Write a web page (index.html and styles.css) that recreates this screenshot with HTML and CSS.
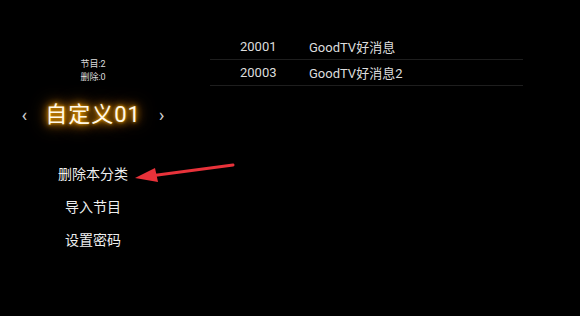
FILE: index.html
```html
<!DOCTYPE html>
<html>
  <head>
    <title>自定义分类</title>
    <link rel="stylesheet" href="styles.css">
  </head>
  <body>
    <div class="screen">
      <div class="side">
        <div class="stats">
          <div>节目:2</div>
          <div>删除:0</div>
        </div>
        <div class="switcher">
          <span class="nav">&lsaquo;</span>
          <span class="title">自定义01</span>
          <span class="nav">&rsaquo;</span>
        </div>
        <ul class="menu">
          <li>删除本分类</li>
          <li>导入节目</li>
          <li>设置密码</li>
        </ul>
      </div>
      <div class="list">
        <div class="row">
          <span class="num">20001</span>
          <span class="name">GoodTV好消息</span>
        </div>
        <div class="row">
          <span class="num">20003</span>
          <span class="name">GoodTV好消息2</span>
        </div>
      </div>
      <svg class="pointer" width="580" height="316" viewBox="0 0 580 316">
        <line x1="233" y1="165" x2="150" y2="176" stroke="#e8323a" stroke-width="3" stroke-linecap="round"/>
        <polygon points="135,178 155,168 158,182" fill="#e8323a"/>
      </svg>
    </div>
  </body>
</html>
```

FILE: styles.css
```css
body {
  margin: 0;
  background-color: #000;
  font-family: "Roboto", "Noto Sans CJK SC", sans-serif;
  color: #e6e6e6;
}
.screen {
  position: relative;
  width: 580px;
  height: 316px;
  display: flex;
  overflow: hidden;
}
.side {
  width: 186px;
  padding-top: 58px;
  display: flex;
  flex-direction: column;
  align-items: center;
}
.stats {
  font-size: 9px;
  line-height: 13px;
  text-align: center;
  color: #ddd;
}
.switcher {
  margin-top: 16px;
  display: flex;
  align-items: center;
  gap: 16px;
}
.nav {
  font-size: 19px;
  color: #ccc;
  line-height: 30px;
  padding: 0 2px;
}
.title {
  font-size: 22px;
  line-height: 30px;
  color: #fff8e8;
  text-shadow: 0 0 3px #f5a800, 0 0 7px #f09800, 0 0 12px #e08a00, 0 0 18px #b86e00;
  letter-spacing: 1px;
}
.menu {
  list-style: none;
  margin: 28px 0 0;
  padding: 0;
  text-align: center;
  font-size: 14px;
  line-height: 33px;
  color: #eee;
}
.list {
  margin-left: 24px;
  width: 313px;
  padding-top: 34px;
}
.row {
  display: flex;
  height: 25px;
  align-items: center;
  border-bottom: 1px solid #1e1e1e;
  font-size: 13px;
  color: #ddd;
}
.num {
  width: 69px;
  padding-left: 30px;
}
.pointer {
  position: absolute;
  left: 0;
  top: 0;
}
```
